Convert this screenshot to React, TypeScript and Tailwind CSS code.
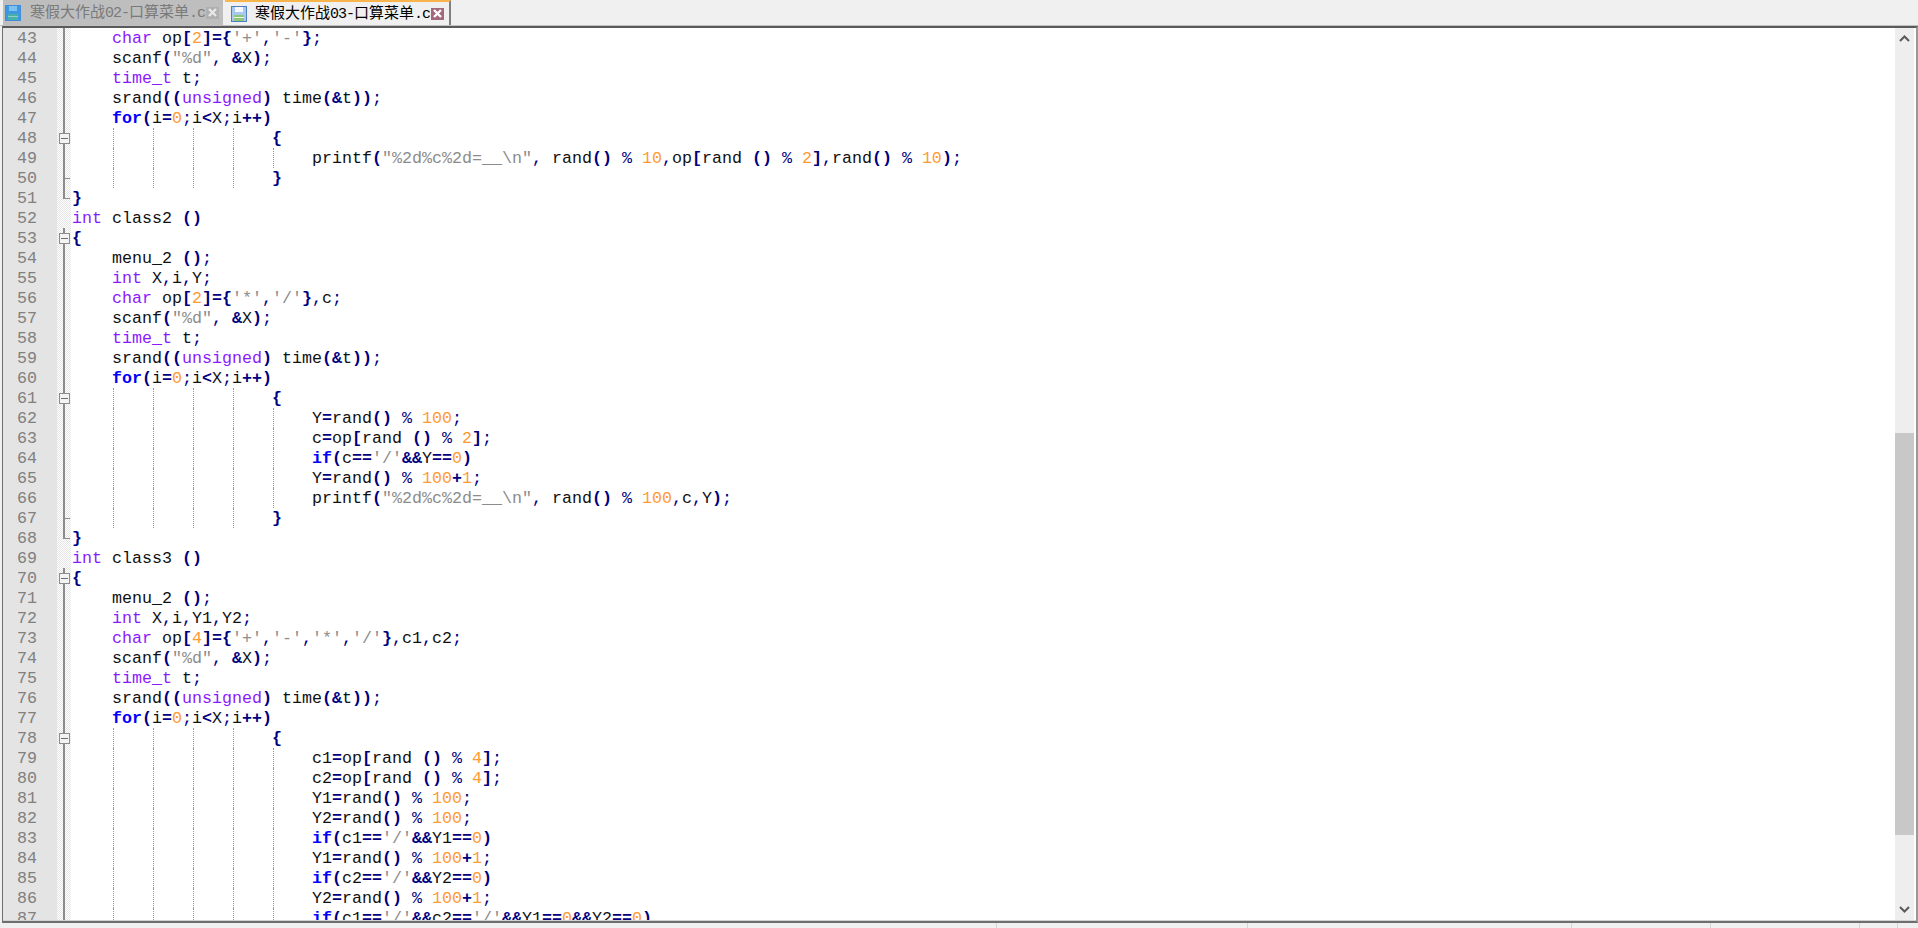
import React from 'react';

const mono = "font-['Liberation_Mono','Courier_New',monospace]";
const cjk = "font-['Noto_Sans_CJK_SC',sans-serif]";

const KEYWORDS = ['for', 'if'];
const TYPES = ['char', 'int', 'time_t', 'unsigned'];

const src = [
  `    char op[2]={'+','-'};`,
  `    scanf("%d", &X);`,
  `    time_t t;`,
  `    srand((unsigned) time(&t));`,
  `    for(i=0;i<X;i++)`,
  `                    {`,
  `                        printf("%2d%c%2d=__\\n", rand() % 10,op[rand () % 2],rand() % 10);`,
  `                    }`,
  `}`,
  `int class2 ()`,
  `{`,
  `    menu_2 ();`,
  `    int X,i,Y;`,
  `    char op[2]={'*','/'},c;`,
  `    scanf("%d", &X);`,
  `    time_t t;`,
  `    srand((unsigned) time(&t));`,
  `    for(i=0;i<X;i++)`,
  `                    {`,
  `                        Y=rand() % 100;`,
  `                        c=op[rand () % 2];`,
  `                        if(c=='/'&&Y==0)`,
  `                        Y=rand() % 100+1;`,
  `                        printf("%2d%c%2d=__\\n", rand() % 100,c,Y);`,
  `                    }`,
  `}`,
  `int class3 ()`,
  `{`,
  `    menu_2 ();`,
  `    int X,i,Y1,Y2;`,
  `    char op[4]={'+','-','*','/'},c1,c2;`,
  `    scanf("%d", &X);`,
  `    time_t t;`,
  `    srand((unsigned) time(&t));`,
  `    for(i=0;i<X;i++)`,
  `                    {`,
  `                        c1=op[rand () % 4];`,
  `                        c2=op[rand () % 4];`,
  `                        Y1=rand() % 100;`,
  `                        Y2=rand() % 100;`,
  `                        if(c1=='/'&&Y1==0)`,
  `                        Y1=rand() % 100+1;`,
  `                        if(c2=='/'&&Y2==0)`,
  `                        Y2=rand() % 100+1;`,
  `                        if(c1=='/'&&c2=='/'&&Y1==0&&Y2==0)`,
];

// fold margin marker per line, everything else is a plain line
const folds: Record<number, string> = {
  48: 'box', 50: 'tick', 51: 'end', 52: 'none', 53: 'box', 61: 'box', 67: 'tick',
  68: 'end', 69: 'none', 70: 'box', 78: 'box',
};

const statusCells = [997, 251, 324, 139, 149, 38];

function tokenClass(t: string) {
  if (/^["']/.test(t)) return 'text-[#8c8c8c]';
  if (/^\d+$/.test(t)) return 'text-[#ff9a33]';
  if (KEYWORDS.includes(t)) return 'text-[#0000ff] font-bold';
  if (TYPES.includes(t)) return 'text-[#8c1aff]';
  if (/^[A-Za-z_]/.test(t)) return 'text-[#111111]';
  if (/^\s+$/.test(t)) return '';
  if (/^[;,%]$/.test(t)) return 'text-[#000080]';
  return 'text-[#000080] font-bold';
}

function Code({ text }: { text: string }) {
  const tokens = text.match(/"[^"]*"|'[^']*'|[A-Za-z_]\w*|\d+|\s+|./g) || [];
  return (
    <>
      {tokens.map((t, i) => (
        <span key={i} className={tokenClass(t)}>{t}</span>
      ))}
    </>
  );
}

function FoldMark({ kind }: { kind: string }) {
  const c = '#8c8c8c';
  return (
    <svg width="14" height="20" className="block" shapeRendering="crispEdges">
      {kind === 'line' && <rect x="6" y="0" width="2" height="20" fill={c} />}
      {kind === 'tick' && (
        <>
          <rect x="6" y="0" width="2" height="20" fill={c} />
          <rect x="8" y="10" width="5" height="1" fill={c} />
        </>
      )}
      {kind === 'end' && (
        <>
          <rect x="6" y="0" width="2" height="11" fill={c} />
          <rect x="8" y="10" width="5" height="1" fill={c} />
        </>
      )}
      {kind === 'box' && (
        <>
          <rect x="6" y="0" width="2" height="20" fill={c} />
          <rect x="2" y="5" width="11" height="11" fill={c} />
          <rect x="3" y="6" width="9" height="9" fill="#f3f3f3" />
          <rect x="4" y="10" width="7" height="1" fill="#707070" />
        </>
      )}
    </svg>
  );
}

function Row({ num, text }: { num: number; text: string }) {
  const indent = text.length - text.trimStart().length;
  const deep = indent > 4;
  const guides = deep ? Math.floor(indent / 4) - 1 : 0;
  const body = deep ? text.slice(indent) : text;
  return (
    <div className="flex h-5 shrink-0 whitespace-pre overflow-hidden">
      <div className="w-[54px] bg-[#e4e4e4] text-right pr-[20px] text-[#808080] leading-[22px]">{num}</div>
      <div className="w-[14px] bg-[repeating-conic-gradient(#e4e4e4_0_25%,#ffffff_0_50%)] bg-[length:2px_2px]">
        <FoldMark kind={folds[num] || 'line'} />
      </div>
      <div className="flex flex-1 pl-[2px]">
        {deep && <div className="w-10 shrink-0" />}
        {Array.from({ length: guides }).map((_, i) => (
          <div key={i} className="w-10 shrink-0 border-l border-dotted border-[#999999]" />
        ))}
        <div className="-ml-px leading-[22px]"><Code text={body} /></div>
      </div>
    </div>
  );
}

function SaveIcon({ active }: { active?: boolean }) {
  return (
    <svg width="16" height="16" viewBox="0 0 16 16" shapeRendering="crispEdges" className="shrink-0">
      <rect x="0" y="0" width="16" height="16" fill={active ? '#4f7fc0' : '#3f8fd8'} />
      <rect x="1" y="1" width="14" height="14" fill={active ? '#a8c8f0' : '#3f97e0'} />
      <rect x="4" y="1" width="8" height="5" fill={active ? '#f4f8fc' : '#7cc0f0'} />
      <rect x="3" y="9" width="10" height="6" fill={active ? '#8cc878' : '#48b0a8'} />
      <rect x="3" y="11" width="10" height="1" fill={active ? '#e8f4e0' : '#8cd0d0'} />
    </svg>
  );
}

function CloseIcon({ active }: { active?: boolean }) {
  return (
    <div className={`w-[13px] h-[12px] flex items-center justify-center shrink-0 ${active ? 'bg-[#a3687c]' : 'bg-[#b0b0b0]'}`}>
      <svg width="9" height="9" viewBox="0 0 9 9">
        <path d="M1 1l7 7M8 1l-7 7" stroke={active ? '#ffffff' : '#e8e8e8'} strokeWidth="2.4" />
      </svg>
    </div>
  );
}

function Tab({ num, active }: { num: string; active?: boolean }) {
  return (
    <div
      className={`flex items-center h-[25px] ${mono} text-[15px] ${
        active
          ? 'w-[226px] pl-[6px] bg-[#f0f0f0] text-black border-t-2 border-t-[#fab44c] border-r-2 border-r-[#808080]'
          : 'w-[220px] ml-[3px] mr-[2px] pl-[2px] bg-[#bebebe] text-[#7a7a7a]'
      }`}
    >
      <SaveIcon active={active} />
      <div className={`whitespace-nowrap shrink-0 w-[176px] ${active ? 'ml-[8px]' : 'ml-[9px]'}`}>
        <span className={cjk}>寒假大作战</span>
        <span className="tracking-[-1px]">{num}-</span>
        <span className={cjk}>口算菜单</span>
        <span className="tracking-[-1px]">.c</span>
      </div>
      <CloseIcon active={active} />
    </div>
  );
}

function Chevron({ down }: { down?: boolean }) {
  return (
    <svg width="11" height="7" viewBox="0 0 11 7" className={`shrink-0 ${down ? 'rotate-180' : ''}`}>
      <path d="M1 6l4.5-4.5L10 6" fill="none" stroke="#5a5a5a" strokeWidth="2" />
    </svg>
  );
}

export default function App() {
  return (
    <div className="w-[1918px] h-[928px] bg-[#f0f0f0] flex flex-col overflow-hidden">
      <div className="flex h-[25px] shrink-0">
        <Tab num="02" />
        <Tab num="03" active />
      </div>
      <div className="h-px shrink-0 bg-[#c0c0c0]" />

      {/* editor frame */}
      <div className={`h-[897px] flex flex-col shrink-0 ml-[2px] border-t-2 border-t-[#5a5a5a] border-b-2 border-b-[#6e6e6e] border-l border-l-[#707070] border-r-2 border-r-[#999999] bg-white ${mono} text-[16.67px]`}>
        <div className="flex-1 min-h-0 flex">
          <div className="flex-1 flex flex-col overflow-hidden">
            {src.map((text, i) => (
              <Row key={i} num={43 + i} text={text} />
            ))}
          </div>
          <div className="w-[19px] mr-[2px] bg-[#eeeeee] flex flex-col items-center">
            <div className="mt-[7px]"><Chevron /></div>
            <div className="w-full h-[402px] bg-[#c8c8c8] mt-[391px] shrink-0" />
            <div className="flex-1" />
            <div className="mb-[7px] h-[7px]"><Chevron down /></div>
          </div>
        </div>
        <div className="h-px shrink-0 bg-[#d0d0d0]" />
      </div>

      {/* status bar, mostly cut off by the window edge */}
      <div className="flex-1 flex bg-[#f0f0f0]">
        {statusCells.map((w, i) => (
          <div key={i} style={{ width: w }} className="border-r border-[#d4d4d4]" />
        ))}
      </div>
    </div>
  );
}
